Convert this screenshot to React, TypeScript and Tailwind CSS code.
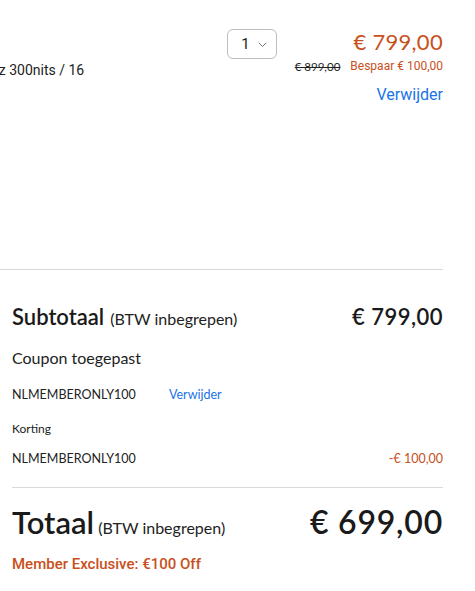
import React from "react";

const roboto = { fontFamily: "Roboto, 'Liberation Sans', sans-serif" };
const geo = { fontFamily: "Lato, 'Open Sans', sans-serif" };

function ChevronDown() {
  return (
    <svg width="9" height="6" viewBox="0 0 9 6" fill="none" className="mt-[1px]">
      <path d="M1 1l3.5 3.5L8 1" stroke="#777" strokeWidth="1" strokeLinecap="round" strokeLinejoin="round" />
    </svg>
  );
}

export default function App() {
  return (
    <div className="min-h-[591px] w-[475px] bg-white text-[#222]">
      <div className="w-[443px]">
        {/* cart line */}
        <div className="flex h-[269px] overflow-hidden pt-[29px]">
          <div className="relative min-w-0 flex-1 overflow-hidden">
            <div
              className="absolute left-[-116px] top-[31px] whitespace-nowrap text-[14px] text-[#222]"
              style={roboto}
            >
              27 inch QHD 165Hz 300nits / 16
            </div>
          </div>
          <div className="flex w-[50px] shrink-0 justify-start">
            <div className="flex h-[30px] w-[50px] items-center justify-center gap-[8px] rounded-[6px] border border-[#bdbdbd] pl-[4px]">
              <span className="text-[15px] leading-none text-[#222]" style={roboto}>1</span>
              <ChevronDown />
            </div>
          </div>
          <div className="flex w-[166px] shrink-0 flex-col items-end">
            <div className="text-[22px] leading-[26px] tracking-[0.3px] text-[#c8501c]" style={geo}>€ 799,00</div>
            <div className="mt-[5px] flex items-center gap-[10px] leading-[13px]" style={roboto}>
              <span className="text-[11.5px] text-[#222] line-through" style={geo}>€ 899,00</span>
              <span className="text-[12px] text-[#c8501c]">Bespaar € 100,00</span>
            </div>
            <div className="mt-[13px] text-[16px] leading-[18px] text-[#1a73e8]" style={roboto}>Verwijder</div>
          </div>
        </div>

        <div className="h-px bg-[#d9d9d9]" />

        {/* summary */}
        <div className="pl-3" style={geo}>
          <div className="flex items-baseline justify-between pt-[30px]">
            <div className="flex items-baseline gap-[6px]">
              <span className="text-[22px] font-semibold leading-[26px] text-[#1a1a1a]">Subtotaal</span>
              <span className="text-[16px] text-[#222]">(BTW inbegrepen)</span>
            </div>
            <span className="text-[22px] font-semibold tracking-[0.5px] text-[#1a1a1a]">€ 799,00</span>
          </div>

          <div className="mt-[16px] text-[16px] leading-[18px] text-[#222]">Coupon toegepast</div>

          <div className="mt-[21px] flex items-center text-[12.5px] leading-[14px]">
            <span className="w-[157px] text-[#222]">NLMEMBERONLY100</span>
            <span className="text-[#1a73e8]">Verwijder</span>
          </div>

          <div className="mt-[20px] text-[12px] leading-[14px] text-[#222]">Korting</div>

          <div className="mt-[16px] flex items-center justify-between text-[12.5px] leading-[14px]">
            <span className="text-[#222]">NLMEMBERONLY100</span>
            <span className="text-[#c8501c]">-€ 100,00</span>
          </div>

          <div className="mt-[21px] h-px bg-[#d9d9d9]" />

          <div className="mt-[16px] flex items-baseline justify-between">
            <div className="flex items-baseline gap-[4px]">
              <span className="text-[31px] font-semibold leading-[36px] text-[#1a1a1a]">Totaal</span>
              <span className="text-[16px] text-[#222]">(BTW inbegrepen)</span>
            </div>
            <span className="text-[32px] font-semibold leading-[36px] tracking-[0.8px] text-[#1a1a1a]">€ 699,00</span>
          </div>

          <div className="mt-[15px] text-[15px] font-medium leading-[18px] text-[#c8501c]" style={roboto}>
            Member Exclusive: €100 Off
          </div>
        </div>
      </div>
    </div>
  );
}
